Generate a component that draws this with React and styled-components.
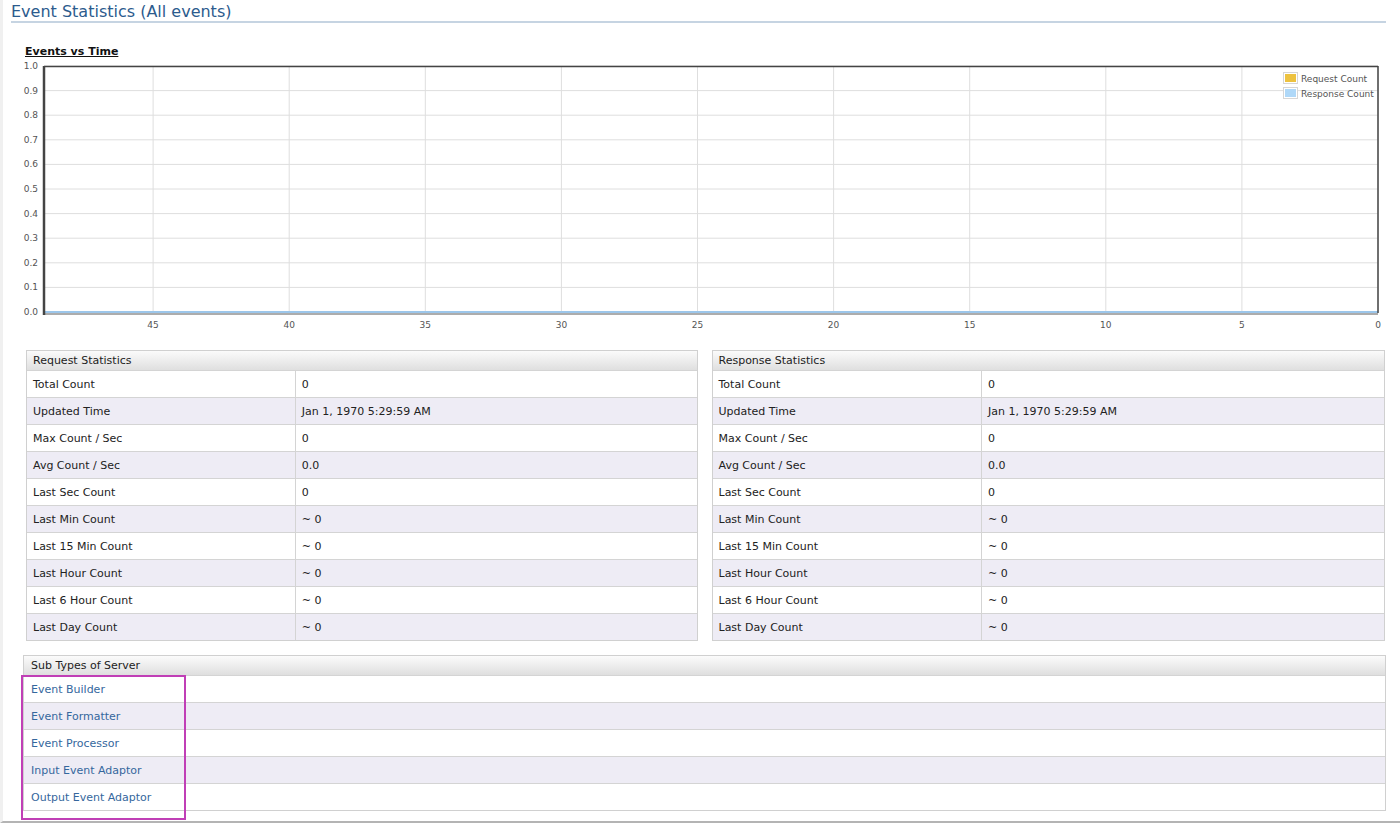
import React from "react";
import styled, { createGlobalStyle } from "styled-components";

const Global = createGlobalStyle`
  html, body { margin: 0; padding: 0; background: #fff; }
  body { font-family: "DejaVu Sans", Verdana, sans-serif; color: #222; }
`;

const Page = styled.div`
  border-left: 3px solid #f0f0f0;
  border-bottom: 2px solid #b4b4b4;
  height: 823px;
  box-sizing: border-box;
  padding-right: 14px;
  overflow: hidden;
`;

const Title = styled.h2`
  margin: 0 0 0 8px;
  padding-top: 2px;
  font-size: 16px;
  line-height: 19px;
  font-weight: normal;
  color: #2c5b8d;
  border-bottom: 2px solid #c6d4e2;
`;

const ChartHeading = styled.div`
  margin: 22px 0 0 22px;
  font-size: 11px;
  line-height: 13px;
  font-weight: bold;
  text-decoration: underline;
  color: #111;
`;

const ChartWrap = styled.div`
  margin: 2px 0 0 17px;
  height: 275px;
`;

const StatsRow = styled.div`
  display: flex;
  align-items: flex-start;
  gap: 14px;
  margin: 15px 0 0 23px;
  padding-right: 1px;
`;

const Table = styled.table`
  border-collapse: separate;
  border-spacing: 0;
  flex: ${(p) => (p.$wide ? "1 1 674px" : "1 1 672px")};
  width: ${(p) => (p.$full ? "100%" : "auto")};
  font-size: 11px;
  border: 1px solid #d0d0d0;
`;

const HeadCell = styled.th`
  text-align: left;
  font-weight: normal;
  height: 19px;
  padding: 0 ${(p) => p.$pad || 6}px;
  color: #222;
  background: linear-gradient(#fbfbfb, #dfdfdf);
`;

const Row = styled.tr`
  background: ${(p) => (p.$alt ? "#eeecf5" : "#ffffff")};
`;

const Cell = styled.td`
  height: 26px;
  padding: 0 ${(p) => p.$pad || 6}px;
  color: #222;
  border-top: 1px solid #d4d4d4;
  width: ${(p) => p.$w || "auto"};
  border-left: ${(p) => (p.$divider ? "1px solid #d4d4d4" : "none")};
`;

const SubWrap = styled.div`
  position: relative;
  margin: 14px 0 0 20px;
`;

const Link = styled.a`
  color: #35679d;
  text-decoration: none;
  cursor: pointer;
`;

const Highlight = styled.div`
  position: absolute;
  left: -2px;
  top: 20px;
  width: 161px;
  height: 141px;
  border: 2px solid #c03fb6;
  pointer-events: none;
`;

const LegendText = styled.text`
  font-family: "DejaVu Sans", sans-serif;
  font-size: 9px;
  fill: #545454;
`;

const AxisText = styled.text`
  font-family: "DejaVu Sans", sans-serif;
  font-size: 9px;
  fill: #545454;
`;

function Chart() {
  const left = 24;
  const right = 1358;
  const top = 6;
  const bottom = 252;
  const step = (bottom - top) / 10;
  const xStep = 136.1;
  const ys = Array.from({ length: 11 }, (_, i) => i);
  const xs = Array.from({ length: 10 }, (_, k) => k);
  return (
    <svg width="1370" height="275" viewBox="0 0 1370 275">
      <rect x={left} y={top} width={right - left} height={bottom - top} fill="#fff" />
      {ys.map((i) => (
        <line key={"h" + i} x1={left} x2={right} y1={top + i * step} y2={top + i * step} stroke="#dedede" strokeWidth="1" />
      ))}
      {xs.map((k) => (
        <line key={"v" + k} x1={right - k * xStep} x2={right - k * xStep} y1={top} y2={bottom} stroke="#dedede" strokeWidth="1" />
      ))}
      {ys.map((i) => (
        <AxisText key={"yl" + i} x={18} y={top + (10 - i) * step + 3} textAnchor="end">
          {(i / 10).toFixed(1)}
        </AxisText>
      ))}
      {xs.map((k) => (
        <AxisText key={"xl" + k} x={right - k * xStep} y={268} textAnchor="middle">
          {k * 5}
        </AxisText>
      ))}
      <line x1={left} x2={right} y1={bottom + 2} y2={bottom + 2} stroke="#8a8a8a" strokeWidth="2" opacity="0.7" />
      <line x1={left} x2={right} y1={bottom} y2={bottom} stroke="#9cc6ea" strokeWidth="2" />
      <line x1={left} x2={right} y1={top + 0.5} y2={top + 0.5} stroke="#444" strokeWidth="1.5" />
      <line x1={left} x2={left} y1={top} y2={bottom + 3} stroke="#444" strokeWidth="2.5" />
      <line x1={right} x2={right} y1={top} y2={bottom + 1} stroke="#444" strokeWidth="1.5" />
      <g>
        <rect x={1263.5} y={12.5} width={14} height={11} fill="#fff" stroke="#d6d6d6" />
        <rect x={1265} y={14} width={11} height={8} fill="#edc240" />
        <LegendText x={1281} y={21.5}>Request Count</LegendText>
        <rect x={1263.5} y={27.5} width={14} height={11} fill="#fff" stroke="#d6d6d6" />
        <rect x={1265} y={29} width={11} height={8} fill="#afd8f8" />
        <LegendText x={1281} y={36.5}>Response Count</LegendText>
      </g>
    </svg>
  );
}

const rowsData = [
  ["Total Count", "0"],
  ["Updated Time", "Jan 1, 1970 5:29:59 AM"],
  ["Max Count / Sec", "0"],
  ["Avg Count / Sec", "0.0"],
  ["Last Sec Count", "0"],
  ["Last Min Count", "~ 0"],
  ["Last 15 Min Count", "~ 0"],
  ["Last Hour Count", "~ 0"],
  ["Last 6 Hour Count", "~ 0"],
  ["Last Day Count", "~ 0"],
];

const subTypes = [
  "Event Builder",
  "Event Formatter",
  "Event Processor",
  "Input Event Adaptor",
  "Output Event Adaptor",
];

function StatsTable({ title, wide }) {
  return (
    <Table $wide={wide}>
      <thead>
        <tr>
          <HeadCell colSpan={2}>{title}</HeadCell>
        </tr>
      </thead>
      <tbody>
        {rowsData.map(([k, v], i) => (
          <Row key={k} $alt={i % 2 === 1}>
            <Cell $w="40%">{k}</Cell>
            <Cell $divider>{v}</Cell>
          </Row>
        ))}
      </tbody>
    </Table>
  );
}

export default function App() {
  return (
    <>
      <Global />
      <Page>
        <Title>Event Statistics (All events)</Title>
        <ChartHeading>Events vs Time</ChartHeading>
        <ChartWrap>
          <Chart />
        </ChartWrap>
        <StatsRow>
          <StatsTable title="Request Statistics" />
          <StatsTable title="Response Statistics" wide />
        </StatsRow>
        <SubWrap>
          <Table $full>
            <thead>
              <tr>
                <HeadCell $pad={7}>Sub Types of Server</HeadCell>
              </tr>
            </thead>
            <tbody>
              {subTypes.map((s, i) => (
                <Row key={s} $alt={i % 2 === 1}>
                  <Cell $pad={7}>
                    <Link>{s}</Link>
                  </Cell>
                </Row>
              ))}
            </tbody>
          </Table>
          <Highlight />
        </SubWrap>
      </Page>
    </>
  );
}
